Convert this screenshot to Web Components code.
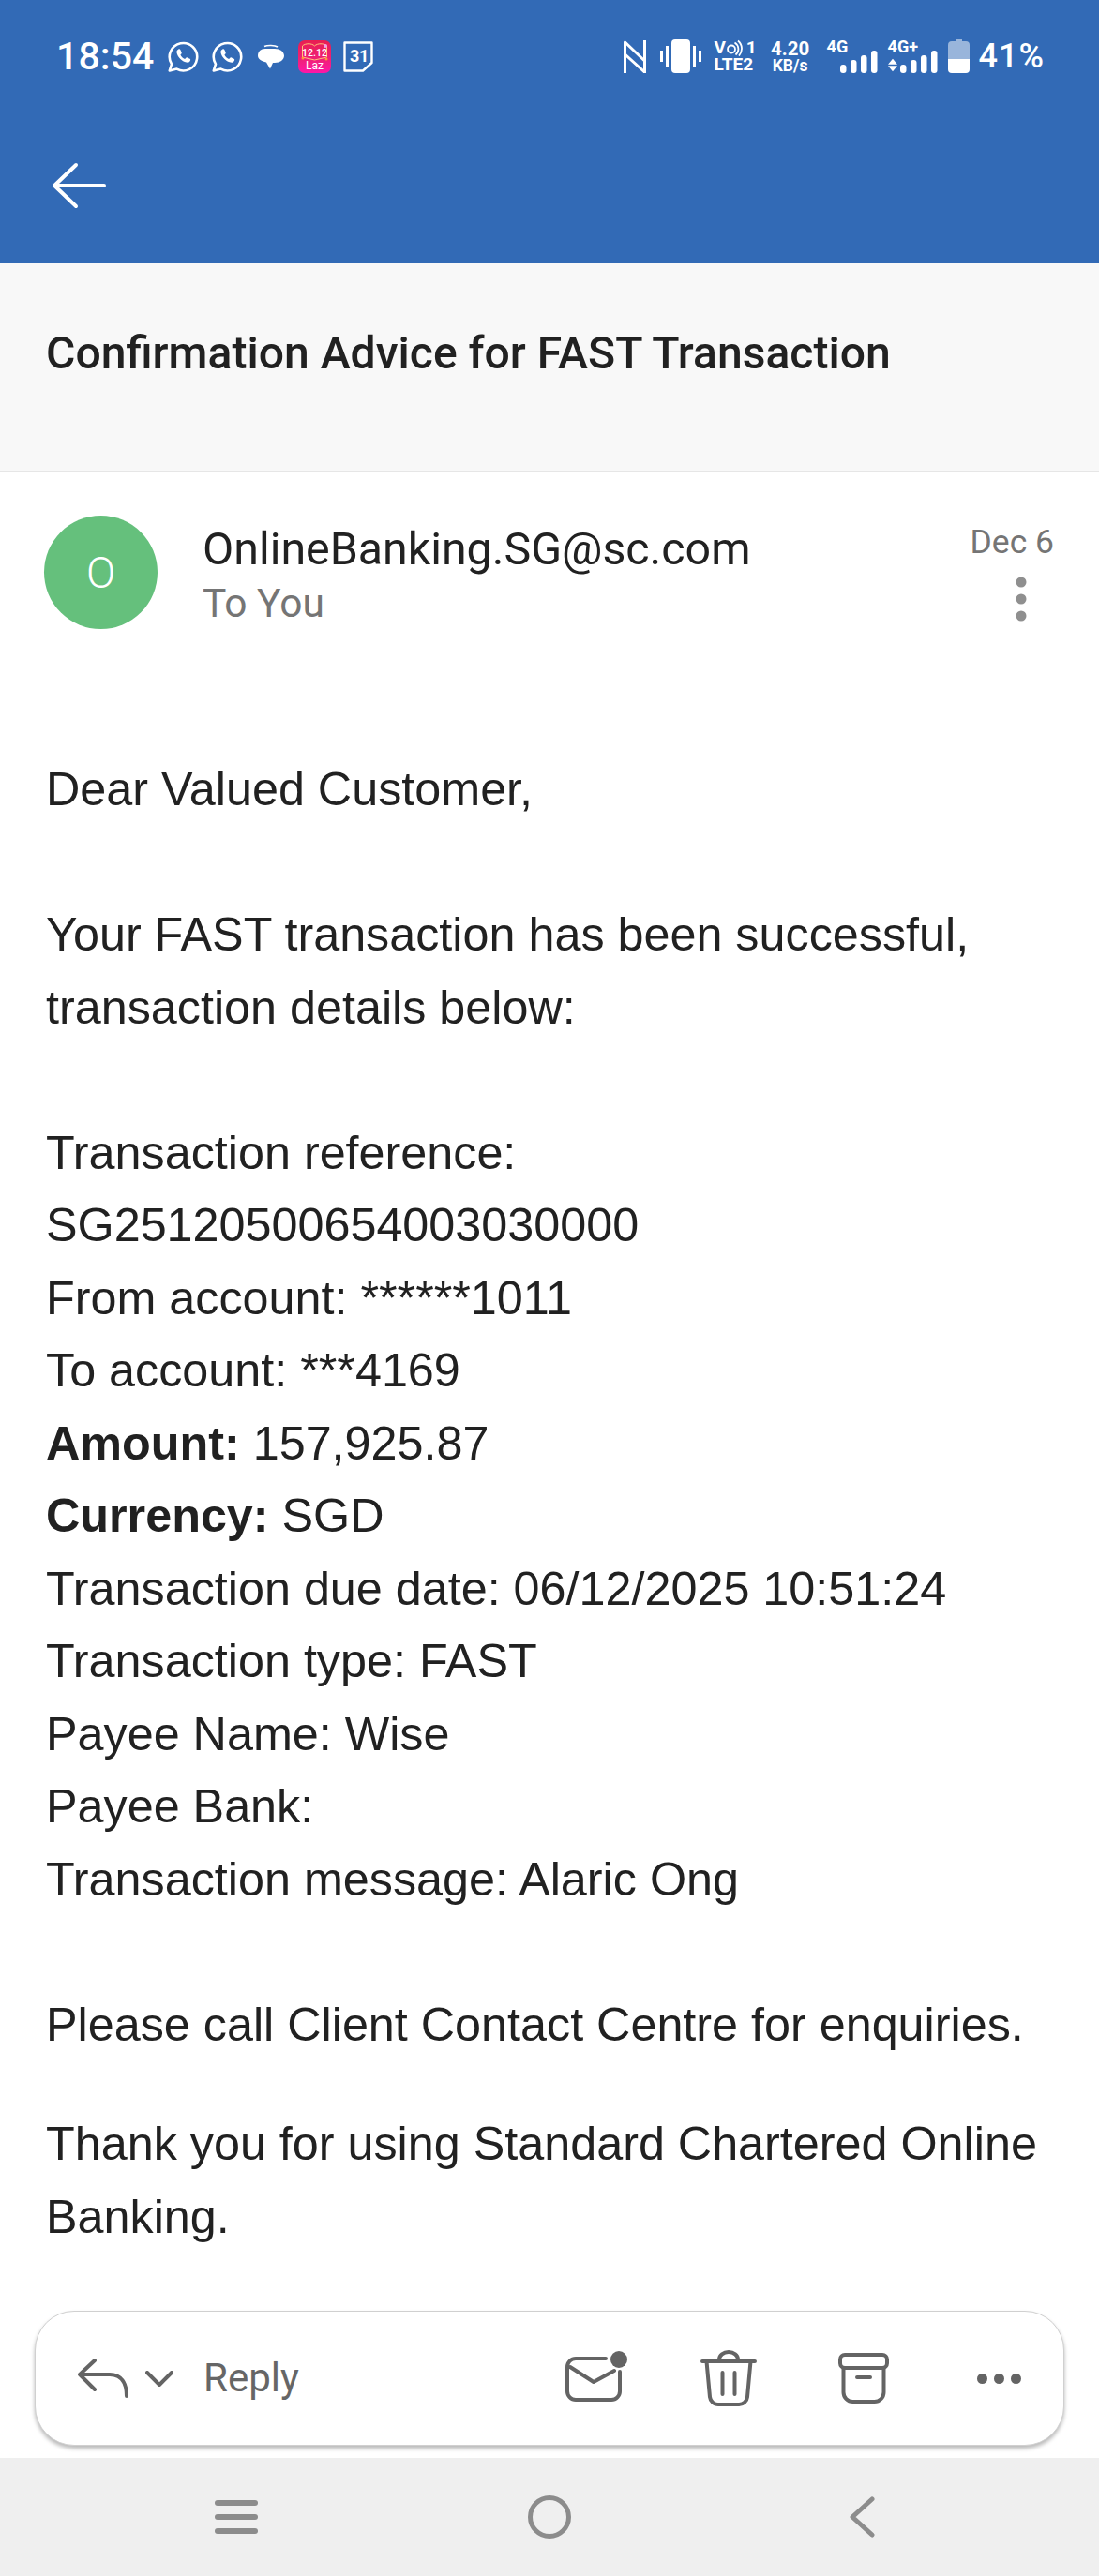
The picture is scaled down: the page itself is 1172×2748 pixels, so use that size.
<!DOCTYPE html>
<html lang="en">
<head>
<meta charset="utf-8">
<title>Confirmation Advice for FAST Transaction</title>
<style>
  html, body { margin: 0; padding: 0; background: #fff; }
  body { font-family: Roboto, "Liberation Sans", sans-serif; color: #212121; }
</style>
</head>
<body>
<mail-screen>
  <status-bar></status-bar>
  <app-bar></app-bar>
  <mail-subject>Confirmation Advice for FAST Transaction</mail-subject>
  <mail-head sender="OnlineBanking.SG@sc.com" to="To You" date="Dec 6" initial="O"></mail-head>
  <mail-body>
    <p>Dear Valued Customer,<br><br>Your FAST transaction has been successful, transaction details below:<br><br>Transaction reference:<br>SG25120500654003030000<br>From account: ******1011<br>To account: ***4169<br><b>Amount:</b> 157,925.87<br><b>Currency:</b> SGD<br>Transaction due date: 06/12/2025 10:51:24<br>Transaction type: FAST<br>Payee Name: Wise<br>Payee Bank:<br>Transaction message: Alaric Ong<br><br>Please call Client Contact Centre for enquiries.</p>
    <p>Thank you for using Standard Chartered Online Banking.</p>
  </mail-body>
  <reply-bar></reply-bar>
  <nav-bar></nav-bar>
</mail-screen>

<script>
(function() {
  function tpl(html) {
    const t = document.createElement("template");
    t.innerHTML = html;
    return t;
  }

  class Base extends HTMLElement {
    constructor() {
      super();
      this.attachShadow({ mode: "open" });
      this.shadowRoot.appendChild(this.constructor.template.content.cloneNode(true));
    }
  }

  class MailScreen extends Base {
    static template = tpl(`
      <style>
      :host { display: flex; flex-direction: column; width: 1172px; height: 2748px; overflow: hidden; background: #fff; }
      </style>
      <slot></slot>`);
  }

  const whatsapp = `
    <svg width="33" height="33" viewBox="0 0 33 33" fill="none" stroke="#fff">
      <path stroke-width="2.600" stroke-linejoin="round" d="M1.800 31.500 L4 24.400 A14.700 14.700 0 1 1 9.500 29.600 Z"/>
      <path fill="#fff" stroke="none" d="M11.400 8.600 c.8-.4 1.500-.3 1.900.5 l1.300 2.700 c.3.6.2 1.100-.2 1.600 l-1 1.200 c1 2 2.600 3.500 4.700 4.500 l1.300-1.400 c.4-.4.9-.5 1.400-.3 l2.700 1.300 c.7.4.8.9.5 1.700 -.7 1.800-2.400 2.600-4.200 2.200 -5-1.100-9.300-5.400-10.300-10.300 -.3-1.700.3-3 1.900-3.700z"/>
    </svg>`;

  const bars = `
    <rect x="0" y="15" width="6.500" height="9" rx="3"/>
    <rect x="11" y="10" width="6.500" height="14" rx="3"/>
    <rect x="22" y="5" width="6.500" height="19" rx="3"/>
    <rect x="33" y="0" width="6.500" height="24" rx="3"/>`;

  class StatusBar extends Base {
    static template = tpl(`
      <style>
      :host { display: flex; align-items: center; height: 120px; padding-left: 60px; padding-right: 58px; background: #326ab6; color: #fff; font-family: Roboto, sans-serif; }
      svg { display: block; flex: none; }
      .time { font-size: 41px; font-weight: 500; line-height: 40px; width: 119px; letter-spacing: .1px; flex: none; }
      .laz { position: relative; flex: none; width: 35px; height: 35px; margin-left: 15px; border-radius: 7px; background: linear-gradient(#e81e50, #f0207a 60%, #ff16a8); overflow: hidden; }
      .laz svg { position: absolute; left: 0; top: 0; }
      .laz span { position: absolute; left: 0; right: 0; text-align: center; color: #fff; }
      .laz .d { top: 8px; font-size: 10.500px; font-weight: 500; line-height: 11px; }
      .laz .n { top: 21px; font-size: 12px; line-height: 13px; }
      .cal { position: relative; flex: none; width: 32px; height: 33px; margin-left: 13px; }
      .cal span { position: absolute; left: 7px; top: 6px; font-size: 18px; font-weight: 700; line-height: 20px; letter-spacing: -.3px; }
      .stack { display: flex; flex-direction: column; font-weight: 700; flex: none; }
      .right { display: flex; align-items: center; margin-left: auto; }
      .sim { width: 45px; margin-left: 14px; height: 36px; font-size: 19px; line-height: 18px; }
      .sim .top { display: flex; align-items: center; height: 18px; }
      .sim .top b { margin-left: auto; font-weight: 700; }
      .speed { width: 40px; margin-left: 16px; height: 36px; align-items: center; }
      .speed .a { font-size: 20.500px; line-height: 20px; font-weight: 700; white-space: nowrap; }
      .speed .b { font-size: 17.500px; line-height: 16px; font-weight: 700; white-space: nowrap; }
      .net { position: relative; height: 36px; flex: none; }
      .net span { position: absolute; left: 0; top: -1px; font-size: 18px; font-weight: 700; line-height: 18px; white-space: nowrap; }
      .net svg { position: absolute; right: 0; bottom: 0; }
      .n1 { width: 54px; margin-left: 19px; }
      .n2 { width: 53px; margin-left: 11px; }
      .pct { font-size: 36px; line-height: 40px; font-weight: 500; margin-left: 10px; letter-spacing: 1px; white-space: nowrap; }
      </style>
      <span class="time">18:54</span>
      ${whatsapp}
      <span style="width:14px;flex:none"></span>
      ${whatsapp}
      <svg style="margin-left:16px" width="28" height="27" viewBox="0 0 28 27" fill="#fff">
        <path d="M7 2.500 c3-1.500 11-1.500 14 .5" fill="none" stroke="#fff" stroke-width="1.600"/>
        <path d="M8 5 h10 c5.500 0 10 3 10 7.500 s-4.500 7.500-10 7.500 h-2 l-3 6.500 -4-7 c-5-1-9-3.500-9-7 c0-4.500 3-7.500 8-7.500z"/>
      </svg>
      <span class="laz">
        <svg width="35" height="35" viewBox="0 0 35 35" fill="none" stroke="#ffc27a" stroke-width="1">
          <path d="M17.500 6 c-3-3-10-3-13 0 v12 l13 3 13-3 v-12 c-3-3-10-3-13 0z"/>
          <circle cx="29" cy="6" r="2" fill="#f2a0e8" stroke="none"/>
          <circle cx="5" cy="19" r="1.500" fill="#ff9a3c" stroke="none"/>
          <circle cx="30" cy="20" r="1.500" fill="#ff9a3c" stroke="none"/>
        </svg>
        <span class="d">12.12</span>
        <span class="n">Laz</span>
      </span>
      <span class="cal">
        <svg width="32" height="33" viewBox="0 0 32 33" fill="none" stroke="#fff" stroke-width="2.400" stroke-linejoin="round"><path d="M1.500 1.500 H30.500 V23 L21 31.500 H1.500 Z"/></svg>
        <span>31</span>
      </span>
      <span class="right">
        <svg width="24" height="36" viewBox="0 0 24 36" fill="none" stroke="#fff" stroke-width="3" stroke-linejoin="round"><path d="M1.500 36 V3 L22.500 23 V36 M1.500 16 L22.500 35"/><path d="M22.500 1 V23"/></svg>
        <svg style="margin-left:15px" width="44" height="36" viewBox="0 0 44 36" fill="#fff">
          <rect x="12" y="0" width="20" height="36" rx="4"/>
          <rect x="0" y="12" width="3" height="12"/><rect x="6" y="7" width="3" height="22"/>
          <rect x="35" y="7" width="3" height="22"/><rect x="41" y="12" width="3" height="12"/>
        </svg>
        <span class="stack sim">
          <span class="top"><span>V</span><svg width="18" height="18" viewBox="0 0 17 18" fill="none" stroke="#fff" stroke-width="1.800"><circle cx="5.500" cy="10.500" r="4"/><path d="M9 3.500 a8 8 0 0 1 1 13 M12.500 1.500 a11 11 0 0 1 1 16"/></svg><b>1</b></span>
          <span>LTE2</span>
        </span>
        <span class="stack speed"><span class="a">4.20</span><span class="b">KB/s</span></span>
        <span class="net n1"><span>4G</span>
          <svg width="40" height="24" viewBox="0 0 40 24" fill="#fff">${bars}</svg>
        </span>
        <span class="net n2"><span>4G+</span>
          <svg style="right:auto;left:0;bottom:1px" width="10" height="15" viewBox="0 0 12 16" fill="#fff"><path d="M6 0 L12 7 H0 Z M0 9 H12 L6 16 Z"/></svg>
          <svg width="40" height="24" viewBox="0 0 40 24" fill="#fff">${bars}</svg>
        </span>
        <svg style="margin-left:11px" width="23" height="36" viewBox="0 0 23 36" fill="#fff">
          <path fill-opacity=".5" d="M8 0 h7 v2 h4 a4 4 0 0 1 4 4 v15 H0 V6 a4 4 0 0 1 4-4 h4 z"/>
          <path d="M0 21 H23 V32 a4 4 0 0 1-4 4 H4 a4 4 0 0 1-4-4 z"/>
        </svg>
        <span class="pct">41%</span>
      </span>`);
  }

  class AppBar extends Base {
    static template = tpl(`
      <style>
      :host { display: block; height: 161px; background: #326ab6; box-sizing: border-box; padding: 53px 0 0 55px; }
      svg { display: block; }
      </style>
      <svg width="58" height="50" viewBox="0 0 58 50" fill="none" stroke="#fff" stroke-width="4" stroke-linecap="round" stroke-linejoin="round">
        <path d="M56 25 H3 M26 3 L3 25 L26 47"/>
      </svg>`);
  }

  class MailSubject extends Base {
    static template = tpl(`
      <style>
      :host { display: block; box-sizing: border-box; height: 223px; padding: 66px 49px 0; background: #f8f8f8; border-bottom: 2px solid #e6e6e6; font-size: 48.100px; font-weight: 500; line-height: 60px; color: #212121; }
      </style>
      <slot></slot>`);
  }

  class MailHead extends Base {
    static template = tpl(`
      <style>
      :host { display: flex; align-items: flex-start; padding: 46px 48px 0 47px; height: 252px; box-sizing: border-box; flex: none; }
      .avatar { width: 121px; height: 121px; border-radius: 50%; background: #65c07c; color: #fff; display: flex; align-items: center; justify-content: center; font-size: 46px; font-weight: 300; flex: none; }
      .who { margin-left: 48px; flex: 1; }
      .sender { font-size: 48.300px; line-height: 60px; color: #212121; margin-top: 6px; white-space: nowrap; }
      .to { font-size: 42.500px; line-height: 54px; color: #757575; margin-top: 1px; }
      .side { display: flex; flex-direction: column; align-items: flex-end; }
      .date { font-size: 35.500px; line-height: 44px; color: #757575; margin-top: 6px; }
      svg { display: block; margin: 15px 29px 0 0; }
      </style>
      <div class="avatar"></div>
      <div class="who"><div class="sender"></div><div class="to"></div></div>
      <div class="side">
        <div class="date"></div>
        <svg width="12" height="48" viewBox="0 0 12 48" fill="#8f8f8f"><circle cx="6" cy="6" r="5.500"/><circle cx="6" cy="24" r="5.500"/><circle cx="6" cy="42" r="5.500"/></svg>
      </div>`);
    connectedCallback() {
      const root = this.shadowRoot;
      root.querySelector(".avatar").textContent = this.getAttribute("initial");
      root.querySelector(".sender").textContent = this.getAttribute("sender");
      root.querySelector(".to").textContent = this.getAttribute("to");
      root.querySelector(".date").textContent = this.getAttribute("date");
    }
  }

  class MailBody extends Base {
    static template = tpl(`
      <style>
      :host { display: block; flex: 1; padding: 47px 36px 0 49px; font-family: "Liberation Sans", Arial, sans-serif; font-size: 50.300px; line-height: 77.500px; color: #212121; }
      ::slotted(p) { margin: 0 0 50px; }
      </style>
      <slot></slot>`);
  }

  class ReplyBar extends Base {
    static template = tpl(`
      <style>
      :host { display: flex; align-items: center; flex: none; box-sizing: border-box; height: 144px; margin: 0 37px 13px 37px; padding: 0 45px; background: #fff; border: 1.500px solid #d0d0d0; border-radius: 42px; box-shadow: 0 3px 4px rgba(0,0,0,.28); color: #666; }
      svg { display: block; flex: none; }
      .label { font-size: 42px; line-height: 50px; margin-left: 32px; margin-top: -1px; }
      .tools { display: flex; align-items: center; margin-left: auto; }
      </style>
      <svg width="54" height="42" viewBox="0 0 54 42" fill="none" stroke="#646464" stroke-width="4" stroke-linecap="round" stroke-linejoin="round">
        <path d="M18 2 L2 17 L18 33 M2 17 H34 C46 17 52 26 52 40"/>
      </svg>
      <svg style="margin-left:18px" width="30" height="17" viewBox="0 0 30 17" fill="none" stroke="#646464" stroke-width="4" stroke-linecap="round" stroke-linejoin="round">
        <path d="M2 2 L15 15 L28 2"/>
      </svg>
      <span class="label">Reply</span>
      <span class="tools">
        <svg style="margin-top:-5px" width="68" height="54" viewBox="0 0 68 54" fill="none" stroke="#646464" stroke-width="4" stroke-linecap="round" stroke-linejoin="round">
          <path d="M43 8 H11 A9 9 0 0 0 2 17 V43 A9 9 0 0 0 11 52 H49 A9 9 0 0 0 58 43 V22"/>
          <path d="M5 17 L30 33 L52 21"/>
          <circle cx="57" cy="9" r="9" fill="#646464" stroke="none"/>
        </svg>
        <svg style="margin-left:76px" width="60" height="60" viewBox="0 0 60 60" fill="none" stroke="#646464" stroke-width="4" stroke-linecap="round" stroke-linejoin="round">
          <path d="M2 12 H58 M6.500 12 L10 50 A9 9 0 0 0 19 58 H41 A9 9 0 0 0 50 50 L53.500 12 M20 12 V10 A10 8 0 0 1 40 10 V12 M23.500 24 V47 M36.500 24 V47"/>
        </svg>
        <svg style="margin-left:87px" width="54" height="54" viewBox="0 0 54 54" fill="none" stroke="#646464" stroke-width="4" stroke-linecap="round" stroke-linejoin="round">
          <rect x="2" y="2" width="50" height="14" rx="5"/>
          <path d="M5.500 16 V42 A10 10 0 0 0 15.500 52 H38.500 A10 10 0 0 0 48.500 42 V16 M20 26 H34"/>
        </svg>
        <svg style="margin-left:94px" width="47" height="11" viewBox="0 0 47 11" fill="#646464"><circle cx="5.500" cy="5.500" r="5.500"/><circle cx="23.500" cy="5.500" r="5.500"/><circle cx="41.500" cy="5.500" r="5.500"/></svg>
      </span>`);
  }

  class NavBar extends Base {
    static template = tpl(`
      <style>
      :host { display: flex; align-items: center; flex: none; height: 126px; background: #efefef; padding-left: 229px; box-sizing: border-box; }
      svg { display: block; flex: none; }
      </style>
      <svg width="46" height="36" viewBox="0 0 46 36" fill="#8c8c8c"><rect width="46" height="6" rx="3"/><rect y="15" width="46" height="6" rx="3"/><rect y="30" width="46" height="6" rx="3"/></svg>
      <svg style="margin-left:288px" width="46" height="46" viewBox="0 0 46 46" fill="none" stroke="#8c8c8c" stroke-width="5"><circle cx="23" cy="23" r="20.500"/></svg>
      <svg style="margin-left:296px" width="28" height="44" viewBox="0 0 28 44" fill="none" stroke="#8c8c8c" stroke-width="5" stroke-linecap="round" stroke-linejoin="round"><path d="M25 3 L4 22 L25 41"/></svg>`);
  }

  customElements.define("mail-screen", MailScreen);
  customElements.define("status-bar", StatusBar);
  customElements.define("app-bar", AppBar);
  customElements.define("mail-subject", MailSubject);
  customElements.define("mail-head", MailHead);
  customElements.define("mail-body", MailBody);
  customElements.define("reply-bar", ReplyBar);
  customElements.define("nav-bar", NavBar);
})();
</script>
</body>
</html>
